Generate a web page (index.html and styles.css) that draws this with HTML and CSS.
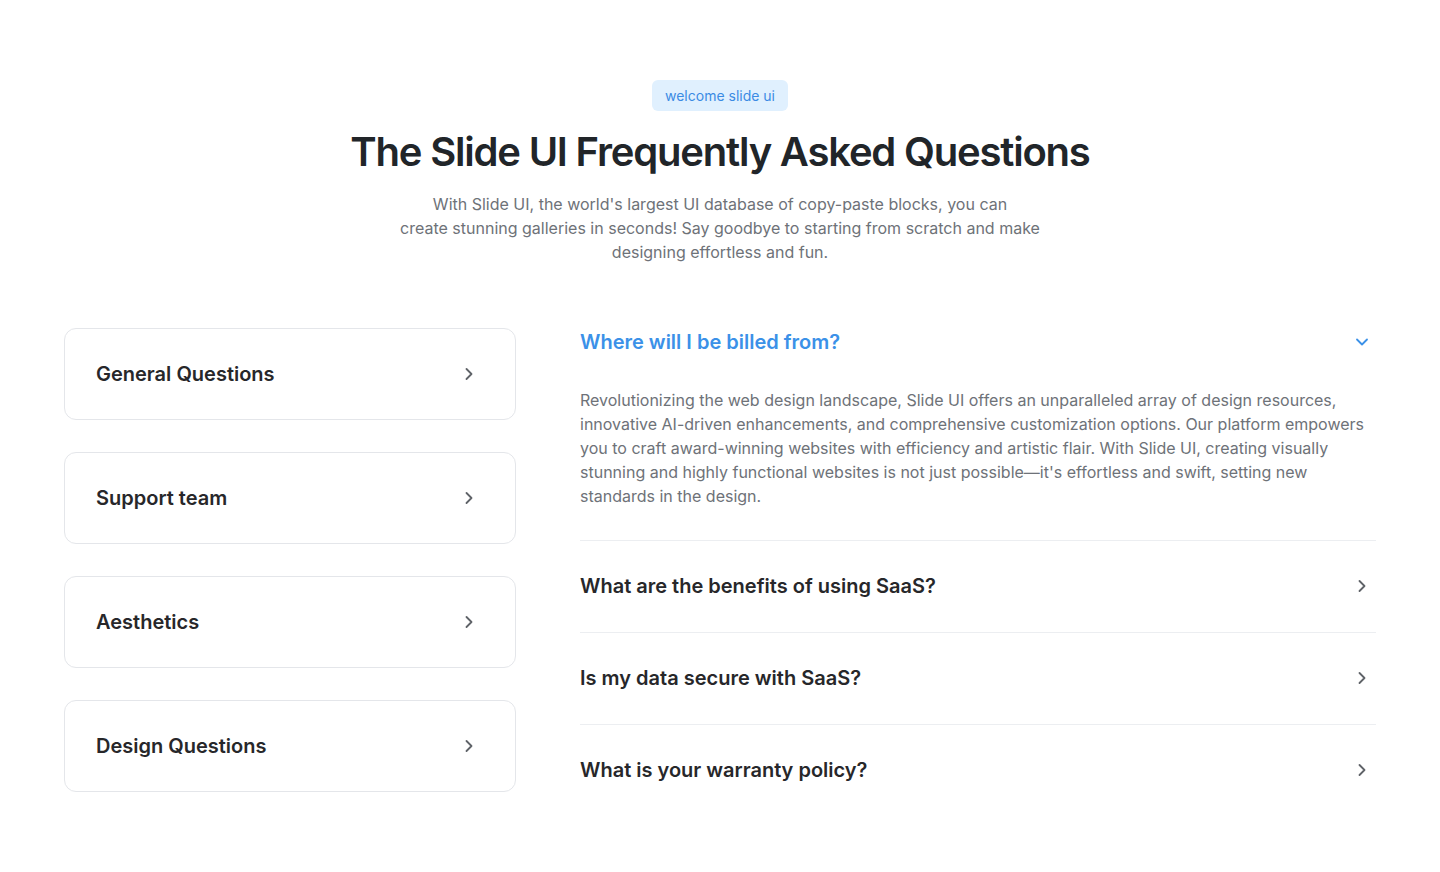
FILE: index.html
```html
<!DOCTYPE html>
<html lang="en">
<head>
<meta charset="utf-8">
<title>FAQ</title>
<link rel="stylesheet" href="styles.css">
</head>
<body>
<section class="faq">
  <header class="intro">
    <span class="badge">welcome slide ui</span>
    <h1 class="title">The Slide UI Frequently Asked Questions</h1>
    <p class="lead">With Slide UI, the world's largest UI database of copy-paste blocks, you can<br>create stunning galleries in seconds! Say goodbye to starting from scratch and make designing effortless and fun.</p>
  </header>
  <div class="grid">
    <nav class="cats">
      <a class="cat">General Questions<svg class="chev" viewBox="0 0 24 24"><path d="M9 6l6 6-6 6"/></svg></a>
      <a class="cat">Support team<svg class="chev" viewBox="0 0 24 24"><path d="M9 6l6 6-6 6"/></svg></a>
      <a class="cat">Aesthetics<svg class="chev" viewBox="0 0 24 24"><path d="M9 6l6 6-6 6"/></svg></a>
      <a class="cat">Design Questions<svg class="chev" viewBox="0 0 24 24"><path d="M9 6l6 6-6 6"/></svg></a>
    </nav>
    <div class="list">
      <div class="item open">
        <div class="q">Where will I be billed from?<svg class="chev" viewBox="0 0 24 24"><path d="M6 9l6 6 6-6"/></svg></div>
        <p class="a">Revolutionizing the web design landscape, Slide UI offers an unparalleled array of design resources, innovative AI-driven enhancements, and comprehensive customization options. Our platform empowers you to craft award-winning websites with efficiency and artistic flair. With Slide UI, creating visually stunning and highly functional websites is not just possible—it's effortless and swift, setting new standards in the design.</p>
      </div>
      <div class="item">
        <div class="q">What are the benefits of using SaaS?<svg class="chev" viewBox="0 0 24 24"><path d="M9 6l6 6-6 6"/></svg></div>
      </div>
      <div class="item">
        <div class="q">Is my data secure with SaaS?<svg class="chev" viewBox="0 0 24 24"><path d="M9 6l6 6-6 6"/></svg></div>
      </div>
      <div class="item">
        <div class="q">What is your warranty policy?<svg class="chev" viewBox="0 0 24 24"><path d="M9 6l6 6-6 6"/></svg></div>
      </div>
    </div>
  </div>
</section>
</body>
</html>
```
FILE: styles.css
```css
* { box-sizing: border-box; }
html, body { margin: 0; background: #fff; }
body { font-family: Inter, "Noto Sans", sans-serif; color: #27272a; }

.faq { padding: 80px 64px 0; }

.intro { display: flex; flex-direction: column; align-items: center; text-align: center; }
.badge {
  display: inline-block;
  background: #e0f0fe;
  color: #3b8be4;
  font-size: 14px;
  line-height: 19px;
  padding: 6px 13px;
  border-radius: 6px;
}
.title {
  margin: 17px 0 0;
  font-size: 40px;
  line-height: 48px;
  font-weight: 600;
  letter-spacing: -1.2px;
  color: #212529;
}
.lead {
  margin: 16px 0 0;
  max-width: 644px;
  font-size: 16px;
  line-height: 24px;
  color: #6e7278;
}

.grid {
  margin-top: 64px;
  display: grid;
  grid-template-columns: 452px 1fr;
  gap: 64px;
  align-items: start;
}

.cats { display: flex; flex-direction: column; gap: 32px; }
.cat {
  display: flex;
  align-items: center;
  justify-content: space-between;
  padding: 31px 36px 31px 31px;
  border: 1px solid #e4e6ea;
  border-radius: 12px;
  font-size: 20px;
  line-height: 28px;
  font-weight: 600;
  color: #27272a;
}

.chev {
  width: 20px;
  height: 20px;
  fill: none;
  stroke: #5f6368;
  stroke-width: 2.2;
  stroke-linecap: round;
  stroke-linejoin: round;
  flex: none;
}

.list { display: flex; flex-direction: column; }
.item { padding: 31px 0 32px; border-bottom: 1px solid #eceef1; }
.item:first-child { padding-top: 0; }
.item:last-child { border-bottom: none; }
.q {
  display: flex;
  align-items: center;
  justify-content: space-between;
  padding-right: 4px;
  font-size: 20px;
  line-height: 28px;
  font-weight: 600;
  color: #27272a;
}
.open .q { color: #3b91e8; }
.open .q .chev { stroke: #3b91e8; }
.a {
  margin: 32px 0 0;
  font-size: 16px;
  line-height: 24px;
  color: #6e7278;
  padding-right: 8px;
}
```
